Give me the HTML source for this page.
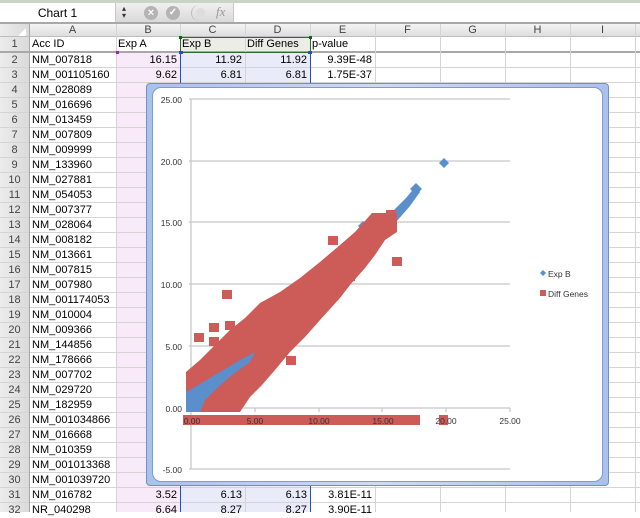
<!DOCTYPE html>
<html><head><style>
*{margin:0;padding:0;box-sizing:border-box}
body{width:640px;height:512px;overflow:hidden;background:#fff;font-family:"Liberation Sans",sans-serif;font-size:11px;color:#000;position:relative}
.a{position:absolute}
.hl{position:absolute;left:0;width:640px;height:1px;background:#d4d4d4}
.vl{position:absolute;top:24px;width:1px;height:488px;background:#d4d4d4}
.ch{position:absolute;top:24px;height:13px;font-size:11px;color:#444;text-align:center;line-height:13px}
.rn{position:absolute;left:0;width:29px;text-align:center;color:#444;font-size:11px;line-height:15px}
.c{position:absolute;height:15px;line-height:15px;white-space:nowrap}
.r{text-align:right;padding-right:3px}
</style></head><body>
<div class="a" style="left:0;top:0;width:640px;height:3px;background:#c9d3c6"></div>
<div class="a" style="left:0;top:3px;width:640px;height:20px;background:#fff"></div>
<div class="a" style="left:0;top:3px;width:116px;height:20px;background:#fff;border-right:1px solid #c8c8c8;text-align:center;line-height:20px;font-size:12px">Chart 1</div>
<div class="a" style="left:116px;top:3px;width:118px;height:20px;background:linear-gradient(#f0f0f0,#d8d8d8);border-right:1px solid #c8c8c8"></div>
<div class="a" style="left:122px;top:5px;font-size:8px;line-height:7px;color:#333">▴<br>▾</div>
<div class="a" style="left:144px;top:6px;width:14px;height:14px;border-radius:50%;background:#b4b4b4;color:#fff;font-size:11px;line-height:14px;text-align:center;font-weight:bold">×</div>
<div class="a" style="left:166px;top:6px;width:14px;height:14px;border-radius:50%;background:#b4b4b4;color:#fff;font-size:10px;line-height:14px;text-align:center;font-weight:bold">✓</div>
<div class="a" style="left:191px;top:5px;width:16px;height:16px;border-radius:50%;border-left:1px solid #bbb"></div>
<div class="a" style="left:196px;top:8px;width:9px;height:9px;border-radius:50%;background:#ddd"></div>
<div class="a" style="left:216px;top:4px;font-family:'Liberation Serif',serif;font-style:italic;font-size:13px;color:#999">fx</div>
<div class="a" style="left:0;top:22px;width:640px;height:2px;background:#a8a8a8"></div>
<div class="a" style="left:0;top:24px;width:640px;height:13px;background:linear-gradient(#f4f4f4,#dcdcdc)"></div>
<div class="a" style="left:0;top:24px;width:29px;height:488px;background:linear-gradient(90deg,#ececec,#dadada)"></div>
<div class="a" style="left:18px;top:28px;width:0;height:0;border-left:8px solid transparent;border-bottom:8px solid #fff"></div>
<div class="a" style="left:116px;top:53px;width:64px;height:459px;background:#f8eaf8"></div>
<div class="a" style="left:180px;top:53px;width:130px;height:459px;background:#e9ecf8"></div>
<div class="a" style="left:180px;top:37px;width:130px;height:15px;background:#ecede6"></div>
<div class="hl" style="top:36px;background:#bdbdbd"></div>
<div class="hl" style="top:51px;height:2px;background:#a8a8a8"></div>
<div class="hl" style="top:67px"></div><div class="hl" style="top:82px"></div><div class="hl" style="top:97px"></div><div class="hl" style="top:112px"></div><div class="hl" style="top:127px"></div><div class="hl" style="top:142px"></div><div class="hl" style="top:157px"></div><div class="hl" style="top:172px"></div><div class="hl" style="top:187px"></div><div class="hl" style="top:202px"></div><div class="hl" style="top:217px"></div><div class="hl" style="top:232px"></div><div class="hl" style="top:247px"></div><div class="hl" style="top:262px"></div><div class="hl" style="top:277px"></div><div class="hl" style="top:292px"></div><div class="hl" style="top:307px"></div><div class="hl" style="top:322px"></div><div class="hl" style="top:337px"></div><div class="hl" style="top:352px"></div><div class="hl" style="top:367px"></div><div class="hl" style="top:382px"></div><div class="hl" style="top:397px"></div><div class="hl" style="top:412px"></div><div class="hl" style="top:427px"></div><div class="hl" style="top:442px"></div><div class="hl" style="top:457px"></div><div class="hl" style="top:472px"></div><div class="hl" style="top:487px"></div><div class="hl" style="top:502px"></div>
<div class="vl" style="left:29px;background:#a8a8a8"></div>
<div class="vl" style="left:116px"></div><div class="vl" style="left:180px"></div><div class="vl" style="left:245px"></div><div class="vl" style="left:310px"></div><div class="vl" style="left:375px"></div><div class="vl" style="left:440px"></div><div class="vl" style="left:505px"></div><div class="vl" style="left:570px"></div><div class="vl" style="left:635px"></div>
<div class="a" style="left:180px;top:37px;width:131px;height:16px;border:1px solid #2e6a2e"></div>
<div class="a" style="left:179px;top:36px;width:3px;height:3px;background:#1d5a1d"></div>
<div class="a" style="left:309px;top:36px;width:3px;height:3px;background:#1d5a1d"></div>
<div class="a" style="left:180px;top:53px;width:1px;height:459px;background:#1f4fcf"></div>
<div class="a" style="left:310px;top:53px;width:1px;height:459px;background:#1f4fcf"></div>
<div class="a" style="left:179px;top:51px;width:4px;height:3px;background:#1f4fcf"></div>
<div class="a" style="left:308px;top:51px;width:4px;height:3px;background:#1f4fcf"></div>
<div class="a" style="left:116px;top:51px;width:3px;height:3px;background:#a020c0"></div>
<div class="ch" style="left:29px;width:87px">A</div><div class="ch" style="left:116px;width:64px">B</div><div class="ch" style="left:180px;width:65px">C</div><div class="ch" style="left:245px;width:65px">D</div><div class="ch" style="left:310px;width:65px">E</div><div class="ch" style="left:375px;width:65px">F</div><div class="ch" style="left:440px;width:65px">G</div><div class="ch" style="left:505px;width:65px">H</div><div class="ch" style="left:570px;width:65px">I</div>
<div class="rn" style="top:37px">1</div>
<div class="c" style="left:32px;top:37px">Acc ID</div>
<div class="c" style="left:118px;top:37px">Exp A</div>
<div class="c" style="left:182px;top:37px">Exp B</div>
<div class="c" style="left:247px;top:37px">Diff Genes</div>
<div class="c" style="left:312px;top:37px">p-value</div>
<div class="rn" style="top:53px">2</div><div class="c" style="left:32px;top:53px">NM_007818</div>
<div class="rn" style="top:68px">3</div><div class="c" style="left:32px;top:68px">NM_001105160</div>
<div class="rn" style="top:83px">4</div><div class="c" style="left:32px;top:83px">NM_028089</div>
<div class="rn" style="top:98px">5</div><div class="c" style="left:32px;top:98px">NM_016696</div>
<div class="rn" style="top:113px">6</div><div class="c" style="left:32px;top:113px">NM_013459</div>
<div class="rn" style="top:128px">7</div><div class="c" style="left:32px;top:128px">NM_007809</div>
<div class="rn" style="top:143px">8</div><div class="c" style="left:32px;top:143px">NM_009999</div>
<div class="rn" style="top:158px">9</div><div class="c" style="left:32px;top:158px">NM_133960</div>
<div class="rn" style="top:173px">10</div><div class="c" style="left:32px;top:173px">NM_027881</div>
<div class="rn" style="top:188px">11</div><div class="c" style="left:32px;top:188px">NM_054053</div>
<div class="rn" style="top:203px">12</div><div class="c" style="left:32px;top:203px">NM_007377</div>
<div class="rn" style="top:218px">13</div><div class="c" style="left:32px;top:218px">NM_028064</div>
<div class="rn" style="top:233px">14</div><div class="c" style="left:32px;top:233px">NM_008182</div>
<div class="rn" style="top:248px">15</div><div class="c" style="left:32px;top:248px">NM_013661</div>
<div class="rn" style="top:263px">16</div><div class="c" style="left:32px;top:263px">NM_007815</div>
<div class="rn" style="top:278px">17</div><div class="c" style="left:32px;top:278px">NM_007980</div>
<div class="rn" style="top:293px">18</div><div class="c" style="left:32px;top:293px">NM_001174053</div>
<div class="rn" style="top:308px">19</div><div class="c" style="left:32px;top:308px">NM_010004</div>
<div class="rn" style="top:323px">20</div><div class="c" style="left:32px;top:323px">NM_009366</div>
<div class="rn" style="top:338px">21</div><div class="c" style="left:32px;top:338px">NM_144856</div>
<div class="rn" style="top:353px">22</div><div class="c" style="left:32px;top:353px">NM_178666</div>
<div class="rn" style="top:368px">23</div><div class="c" style="left:32px;top:368px">NM_007702</div>
<div class="rn" style="top:383px">24</div><div class="c" style="left:32px;top:383px">NM_029720</div>
<div class="rn" style="top:398px">25</div><div class="c" style="left:32px;top:398px">NM_182959</div>
<div class="rn" style="top:413px">26</div><div class="c" style="left:32px;top:413px">NM_001034866</div>
<div class="rn" style="top:428px">27</div><div class="c" style="left:32px;top:428px">NM_016668</div>
<div class="rn" style="top:443px">28</div><div class="c" style="left:32px;top:443px">NM_010359</div>
<div class="rn" style="top:458px">29</div><div class="c" style="left:32px;top:458px">NM_001013368</div>
<div class="rn" style="top:473px">30</div><div class="c" style="left:32px;top:473px">NM_001039720</div>
<div class="rn" style="top:488px">31</div><div class="c" style="left:32px;top:488px">NM_016782</div>
<div class="rn" style="top:503px">32</div><div class="c" style="left:32px;top:503px">NR_040298</div>
<div class="c r" style="left:116px;width:64px;top:53px">16.15</div><div class="c r" style="left:180px;width:65px;top:53px">11.92</div><div class="c r" style="left:245px;width:65px;top:53px">11.92</div><div class="c r" style="left:310px;width:65px;top:53px">9.39E-48</div>
<div class="c r" style="left:116px;width:64px;top:68px">9.62</div><div class="c r" style="left:180px;width:65px;top:68px">6.81</div><div class="c r" style="left:245px;width:65px;top:68px">6.81</div><div class="c r" style="left:310px;width:65px;top:68px">1.75E-37</div>
<div class="c r" style="left:116px;width:64px;top:488px">3.52</div><div class="c r" style="left:180px;width:65px;top:488px">6.13</div><div class="c r" style="left:245px;width:65px;top:488px">6.13</div><div class="c r" style="left:310px;width:65px;top:488px">3.81E-11</div>
<div class="c r" style="left:116px;width:64px;top:503px">6.64</div><div class="c r" style="left:180px;width:65px;top:503px">8.27</div><div class="c r" style="left:245px;width:65px;top:503px">8.27</div><div class="c r" style="left:310px;width:65px;top:503px">3.90E-11</div>
<div class="a" style="left:146px;top:83px;width:463px;height:403px;border:1px solid #6d8fd0;border-radius:4px;background:linear-gradient(90deg,#a9c2ea,#cddbf3 50%,#a9c2ea)"></div>
<div class="a" style="left:152px;top:87px;width:451px;height:395px;background:#fff;border:1px solid #7b9bd6;border-radius:9px"></div>
<svg class="a" style="left:0;top:0" width="640" height="512" viewBox="0 0 640 512">
<g stroke="#c8c8c8" stroke-width="1.3">
<line x1="189" y1="99" x2="510" y2="99"/><line x1="189" y1="161" x2="510" y2="161"/><line x1="189" y1="222" x2="510" y2="222"/><line x1="189" y1="284" x2="510" y2="284"/><line x1="189" y1="346" x2="510" y2="346"/><line x1="189" y1="408" x2="510" y2="408"/><line x1="189" y1="469" x2="510" y2="469"/>
<line x1="191" y1="99" x2="191" y2="469"/>
<line x1="255" y1="408" x2="255" y2="412"/><line x1="319" y1="408" x2="319" y2="412"/><line x1="382" y1="408" x2="382" y2="412"/><line x1="446" y1="408" x2="446" y2="412"/><line x1="510" y1="408" x2="510" y2="412"/>
</g>
<g font-family="Liberation Sans,sans-serif" font-size="8.5" fill="#333" text-anchor="end">
<text x="182" y="103">25.00</text><text x="182" y="165">20.00</text><text x="182" y="226">15.00</text><text x="182" y="288">10.00</text><text x="182" y="350">5.00</text><text x="182" y="412">0.00</text><text x="182" y="473">-5.00</text>
</g>
<g fill="#5b8fcb">
<polygon points="386,218 406,198 416,186 420,192 410,206 396,222"/>
<polygon points="444,158 449,163 444,168 439,163"/>
<polygon points="416,183 422,189 416,195 410,189"/>
<polygon points="363,221 368,226 363,231 358,226"/>
<polygon points="380,226 384,218 390,214 386,226"/>
</g>
<g fill="#cd5b57">
<polygon points="186,372 200,360 215,345 230,330 245,318 260,303 280,292 300,278 320,262 340,245 355,232 372,213 397,213 397,232 385,240 375,255 365,268 350,285 340,298 320,320 305,337 290,352 275,370 262,385 250,397 240,412 186,412"/>
<rect x="222" y="290" width="10" height="9"/>
<rect x="194" y="333" width="10" height="9"/><rect x="209" y="337" width="10" height="9"/><rect x="209" y="323" width="10" height="9"/><rect x="225" y="321" width="10" height="9"/>
<rect x="286" y="356" width="10" height="9"/><rect x="392" y="257" width="10" height="9"/><rect x="345" y="272" width="10" height="9"/><rect x="328" y="236" width="10" height="9"/><rect x="386" y="210" width="10" height="9"/>
<rect x="183" y="415" width="237" height="10"/>
<rect x="439" y="415" width="9" height="10"/>
</g>
<polygon fill="#5b8fcb" points="186,392 200,384 220,372 240,360 255,352 250,362 232,375 215,390 205,400 200,412 186,412"/>
<g font-family="Liberation Sans,sans-serif" font-size="8.5" fill="#333" text-anchor="middle">
<text x="192" y="424">0.00</text><text x="255" y="424">5.00</text><text x="319" y="424">10.00</text><text x="383" y="424">15.00</text><text x="446" y="424">20.00</text><text x="510" y="424">25.00</text>
</g>
<polygon points="543,270 546,273 543,276 540,273" fill="#5b8fcb"/>
<rect x="540" y="290" width="6" height="6" fill="#cd5b57"/>
<g font-family="Liberation Sans,sans-serif" font-size="8.5" fill="#333">
<text x="548" y="277">Exp B</text><text x="548" y="297">Diff Genes</text>
</g>
</svg>
</body></html>
